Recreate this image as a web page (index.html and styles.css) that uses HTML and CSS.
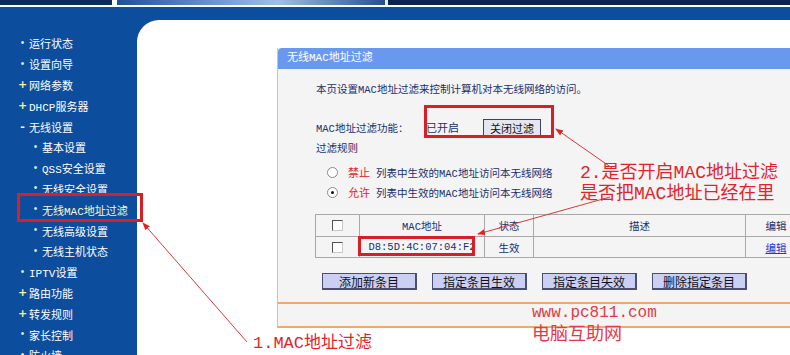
FILE: index.html
```html
<!DOCTYPE html>
<html lang="zh-CN">
<head>
    <meta charset="UTF-8">
    <title>无线MAC地址过滤</title>
    <link rel="stylesheet" href="styles.css">
</head>
<body>
<div class="page">
    <div class="topbar">
        <span class="tb-left"></span>
        <span class="tb-image"></span>
        <span class="tb-right"></span>
    </div>

    <div class="main">
        <ul class="menu">
            <li><span class="dot">•</span>运行状态</li>
            <li><span class="dot">•</span>设置向导</li>
            <li><span class="plus">+</span>网络参数</li>
            <li><span class="plus">+</span>DHCP服务器</li>
            <li><span class="minus">-</span>无线设置</li>
            <li class="sub"><span class="dot">•</span>基本设置</li>
            <li class="sub"><span class="dot">•</span>QSS安全设置</li>
            <li class="sub"><span class="dot">•</span>无线安全设置</li>
            <li class="sub current"><span class="dot">•</span>无线MAC地址过滤</li>
            <li class="sub"><span class="dot">•</span>无线高级设置</li>
            <li class="sub"><span class="dot">•</span>无线主机状态</li>
            <li><span class="dot">•</span>IPTV设置</li>
            <li><span class="plus">+</span>路由功能</li>
            <li><span class="plus">+</span>转发规则</li>
            <li><span class="dot">•</span>家长控制</li>
            <li><span class="dot">•</span>防火墙</li>
        </ul>

        <div class="content">
            <div class="panel">
                <div class="panel-title">无线MAC地址过滤</div>
                <div class="panel-body">
                    <p class="intro">本页设置MAC地址过滤来控制计算机对本无线网络的访问。</p>

                    <div class="func-row">
                        <span class="func-label">MAC地址过滤功能：</span>
                        <span class="func-state">已开启</span>
                        <button class="btn-small">关闭过滤</button>
                    </div>

                    <div class="rules-title">过滤规则</div>
                    <div class="rule rule-first">
                        <span class="radio"></span>
                        <span class="rule-key">禁止</span>
                        <span>列表中生效的MAC地址访问本无线网络</span>
                    </div>
                    <div class="rule">
                        <span class="radio checked"></span>
                        <span class="rule-key">允许</span>
                        <span>列表中生效的MAC地址访问本无线网络</span>
                    </div>

                    <table class="mac-table">
                        <thead>
                            <tr>
                                <th class="col-check"><span class="checkbox"></span></th>
                                <th class="col-mac">MAC地址</th>
                                <th class="col-state">状态</th>
                                <th class="col-desc">描述</th>
                                <th class="col-edit">编辑</th>
                            </tr>
                        </thead>
                        <tbody>
                            <tr>
                                <td><span class="checkbox"></span></td>
                                <td class="mac">D8:5D:4C:07:04:F2</td>
                                <td>生效</td>
                                <td></td>
                                <td><a href="#" class="edit-link">编辑</a></td>
                            </tr>
                        </tbody>
                    </table>

                    <div class="actions">
                        <button>添加新条目</button>
                        <button>指定条目生效</button>
                        <button>指定条目失效</button>
                        <button>删除指定条目</button>
                    </div>
                </div>
                <div class="panel-foot"></div>
            </div>
        </div>
    </div>

    <!-- red annotations drawn over the screenshot -->
    <svg class="marks" width="790" height="355" viewBox="0 0 790 355">
        <defs>
            <marker id="head" markerWidth="8" markerHeight="8" refX="7" refY="4" orient="auto" markerUnits="userSpaceOnUse">
                <path d="M0,1 L8,4 L0,7 Z" fill="#e02424"/>
            </marker>
        </defs>
        <rect x="18.5" y="194.5" width="123" height="26" fill="none" stroke="#d81f26" stroke-width="3"/>
        <rect x="425.5" y="106.5" width="127" height="30" fill="none" stroke="#d81f26" stroke-width="3"/>
        <rect x="359.5" y="237.5" width="114" height="17" fill="none" stroke="#d81f26" stroke-width="3"/>
        <line x1="612" y1="168" x2="556" y2="129" stroke="#d83a3a" stroke-width="1" marker-end="url(#head)"/>
        <line x1="610" y1="197" x2="478" y2="234" stroke="#d83a3a" stroke-width="1" marker-end="url(#head)"/>
        <line x1="247" y1="342" x2="143" y2="223" stroke="#d83a3a" stroke-width="1" marker-end="url(#head)"/>
    </svg>

    <div class="note note-two">2.是否开启MAC地址过滤<br>是否把MAC地址已经在里</div>
    <div class="note note-one">1.MAC地址过滤</div>
    <div class="watermark">www.pc811.com<br><span class="wm-cn">电脑互助网</span></div>
</div>
</body>
</html>
```

FILE: styles.css
```css
body {
    margin: 0;
    background: #fff;
    font-family: "Liberation Mono", "Noto Sans CJK SC", monospace;
}

.page {
    position: relative;
    width: 790px;
    height: 355px;
    overflow: hidden;
}

/* banner strip at the very top */
.topbar {
    display: flex;
    height: 5px;
    border-bottom: 2px solid #fff;
}

.tb-left {
    width: 112px;
    background: #0b2b5e;
    border-right: 5px solid #fff;
}

.tb-image {
    width: 268px;
    background: linear-gradient(90deg, #1d4f9c, #7fa6dc 45%, #9fc0e6 60%, #24508f);
    border-right: 3px solid #e8eef8;
}

.tb-right {
    flex: 1;
    background: #0c2453;
}

.main {
    display: flex;
    height: 348px;
    background: #0d4d9e;
}

/* left navigation */
.menu {
    width: 137px;
    margin: 0;
    padding: 26px 0 0 0;
    list-style: none;
    color: #fff;
    font-size: 11px;
    flex-shrink: 0;
}

.menu li {
    display: flex;
    align-items: center;
    height: 20.8px;
    padding-left: 17px;
    white-space: nowrap;
}

.menu li.sub {
    padding-left: 30px;
}

.menu li.current {
    color: #fbf7cf;
}

.menu .dot,
.menu .plus,
.menu .minus {
    width: 11px;
    text-align: center;
    margin-right: 1px;
}

.menu .dot {
    color: #d8f3d0;
    font-size: 10px;
}

.menu .plus {
    color: #f6f29a;
    font-weight: bold;
    font-family: "DejaVu Sans", sans-serif;
}

.menu .minus {
    color: #fff;
    font-weight: bold;
    font-family: "DejaVu Sans", sans-serif;
}

/* white content area */
.content {
    flex: 1;
    margin-top: 13px;
    background: #fff;
    border-top-left-radius: 22px;
}

.panel {
    width: 560px;
    margin: 28px 0 0 140px;
    border-left: 1px solid #f1b98a;
    background: #f4f4f4;
    color: #1b2f6e;
    font-size: 10.5px;
}

.panel-title {
    height: 21px;
    line-height: 21px;
    padding-left: 9px;
    background: #6999ef;
    color: #fff;
    font-size: 11px;
    border-top-left-radius: 4px;
}

.panel-body {
    padding: 14px 0 12px 38px;
    border-bottom: 2px solid #f3a866;
}

.intro {
    margin: 0;
    line-height: 14px;
}

.func-row {
    display: flex;
    align-items: center;
    height: 22px;
    margin-top: 19px;
}

.func-label {
    width: 110px;
}

.func-state {
    width: 57px;
    font-size: 11px;
}

.btn-small {
    height: 17px;
    width: 58px;
    padding: 0;
    font-family: inherit;
    font-size: 11px;
    color: #111;
    background: #e6e6f0;
    border: 1px solid #3e4260;
}

.rules-title {
    height: 18px;
    line-height: 18px;
    margin-top: 2px;
}

.rule {
    display: flex;
    align-items: center;
    height: 20px;
}

.rule-first {
    margin-top: 4px;
}

.radio {
    width: 9px;
    height: 9px;
    margin: 0 10px 0 11px;
    border: 1px solid #8a8a8a;
    border-radius: 50%;
    background: #fff;
    position: relative;
}

.radio.checked::after {
    content: "";
    position: absolute;
    left: 3px;
    top: 3px;
    width: 3px;
    height: 3px;
    border-radius: 50%;
    background: #111;
}

.rule-key {
    color: #e0241c;
    font-size: 11px;
    margin-right: 6px;
}

.mac-table {
    margin-top: 12px;
    margin-left: -1px;
    border-collapse: collapse;
    table-layout: fixed;
    width: 486px;
}

.mac-table th,
.mac-table td {
    border: 1px solid #a9a9a9;
    padding: 0;
    text-align: center;
    font-weight: normal;
    font-size: 10.5px;
}

.mac-table th {
    height: 21px;
}

.mac-table td {
    height: 20px;
}

.col-check { width: 43px; }
.col-mac { width: 124px; }
.col-state { width: 48px; }
.col-desc { width: 211px; }
.col-edit { width: 60px; }

.checkbox {
    display: inline-block;
    width: 9px;
    height: 9px;
    vertical-align: middle;
    background: #fff;
    border: 1px solid;
    border-color: #555 #c8c8c8 #c8c8c8 #555;
}

.mac {
    font-size: 10px;
}

.edit-link {
    color: #1b3cc4;
}

.actions {
    display: flex;
    gap: 15px;
    margin: 15px 0 0 6px;
}

.actions button {
    width: 95px;
    height: 17px;
    padding: 0;
    font-family: "Noto Sans CJK SC", sans-serif;
    font-size: 12px;
    line-height: 15px;
    color: #111;
    background: #cbcff4;
    border: 1px solid #4a4f72;
    border-right-width: 2px;
    border-bottom-width: 2px;
}

.panel-foot {
    height: 22px;
    border-bottom: 2px solid #f3a866;
}

/* annotations laid over the page */
.marks {
    position: absolute;
    left: 0;
    top: 0;
    pointer-events: none;
}

.note {
    position: absolute;
    color: #e0242a;
    white-space: nowrap;
}

.note-two {
    left: 580px;
    top: 163px;
    font-size: 18px;
    line-height: 21px;
}

.note-one {
    left: 253px;
    top: 334px;
    font-size: 17px;
    line-height: 20px;
}

.watermark {
    position: absolute;
    left: 532px;
    top: 304px;
    color: #e23a48;
    font-size: 16px;
    line-height: 19px;
    white-space: nowrap;
}

.wm-cn {
    font-family: "Noto Sans CJK SC", sans-serif;
    font-size: 18px;
}
```
